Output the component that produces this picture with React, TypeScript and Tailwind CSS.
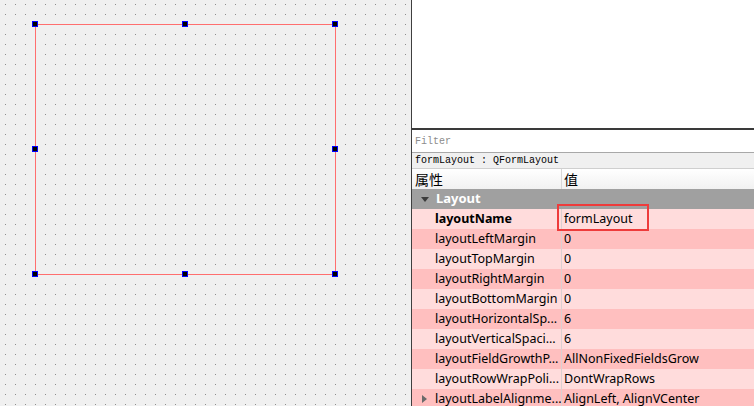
const rows: { name: string; value: string; bold?: boolean; expand?: boolean }[] = [
  { name: "layoutName", value: "formLayout", bold: true },
  { name: "layoutLeftMargin", value: "0" },
  { name: "layoutTopMargin", value: "0" },
  { name: "layoutRightMargin", value: "0" },
  { name: "layoutBottomMargin", value: "0" },
  { name: "layoutHorizontalSp...", value: "6" },
  { name: "layoutVerticalSpaci...", value: "6" },
  { name: "layoutFieldGrowthP...", value: "AllNonFixedFieldsGrow" },
  { name: "layoutRowWrapPoli...", value: "DontWrapRows" },
  { name: "layoutLabelAlignme...", value: "AlignLeft, AlignVCenter", expand: true },
];

const handles = [
  [35, 24], [185, 24], [335, 24],
  [35, 149], [335, 149],
  [35, 274], [185, 274], [335, 274],
];

function Canvas() {
  return (
    <svg width="411" height="406" className="block shrink-0" shapeRendering="crispEdges">
      <defs>
        <pattern id="dots" width="10" height="10" patternUnits="userSpaceOnUse">
          <rect x="5" y="4" width="1" height="1" fill="#8c8c8c" />
        </pattern>
      </defs>
      <rect width="411" height="406" fill="#f0f0f0" />
      <rect width="411" height="406" fill="url(#dots)" />
      <rect x="35" y="24" width="301" height="1" fill="#ff6f6f" />
      <rect x="35" y="274" width="301" height="1" fill="#ff6f6f" />
      <rect x="35" y="24" width="1" height="251" fill="#ff6f6f" />
      <rect x="335" y="24" width="1" height="251" fill="#ff6f6f" />
      {handles.map(([x, y]) => (
        <g key={`${x}-${y}`}>
          <rect x={x - 3} y={y - 3} width="6" height="6" fill="#0000ff" />
          <rect x={x - 2} y={y - 2} width="4" height="4" fill="#000" />
        </g>
      ))}
    </svg>
  );
}

function Arrow({ down }: { down?: boolean }) {
  return down ? (
    <svg width="8" height="5" viewBox="0 0 8 5">
      <path d="M0 0h8L4 5z" fill="#3c3c3c" />
    </svg>
  ) : (
    <svg width="5" height="8" viewBox="0 0 5 8">
      <path d="M0 0v8l5-4z" fill="#6a6a6a" />
    </svg>
  );
}

export default function App() {
  return (
    <div className="flex w-[754px] h-[406px] overflow-hidden bg-[#f0f0f0] font-['Noto_Sans','Noto_Sans_CJK_SC',sans-serif] text-black">
      <Canvas />
      <div className="flex flex-col flex-1 min-w-0 border-l border-[#3f3f3f] bg-white">
        <div className="h-[128px] shrink-0 bg-white" />
        <div className="h-[2px] shrink-0 bg-[#3a3a3a]" />
        <div className="h-[23px] shrink-0 flex items-center pl-[3px] bg-white border-b border-[#a8a8a8] font-['Liberation_Mono',monospace] text-[10px] text-[#8c8c8c]">
          Filter
        </div>
        <div className="h-[16px] shrink-0 flex items-center pl-[3px] bg-[#f0f0f0] border-b border-[#cfcfcf] font-['Liberation_Mono',monospace] text-[10px] leading-none">
          formLayout : QFormLayout
        </div>
        <div className="h-[20px] shrink-0 flex bg-gradient-to-b from-white to-[#f1f1f1] text-[14px] font-['Noto_Sans_CJK_SC',sans-serif] leading-none">
          <div className="w-[150px] shrink-0 flex items-center pl-[3px] border-r border-[#d8d8d8]">属性</div>
          <div className="flex items-center pl-[2px]">值</div>
        </div>
        <div className="h-[20px] shrink-0 flex items-center bg-[#a0a0a0] text-white font-bold text-[13px]">
          <div className="w-[24px] flex justify-center pl-[1px]">
            <Arrow down />
          </div>
          <span>Layout</span>
        </div>
        <div className="relative flex flex-col">
          {rows.map((r, i) => (
            <div
              key={r.name}
              className={`h-[20px] flex shrink-0 text-[12.5px] leading-none ${i % 2 === 0 ? "bg-[#ffdcdc]" : "bg-[#ffbfbf]"}`}
            >
              <div className="w-[150px] shrink-0 overflow-hidden flex items-center border-r border-[#dcd0d0]">
                <div className="w-[23px] shrink-0 flex justify-center pl-[1px]">{r.expand && <Arrow />}</div>
                <span className={`whitespace-nowrap ${r.bold ? "font-bold" : ""}`}>{r.name}</span>
              </div>
              <div className="flex items-center pl-[2px] whitespace-nowrap">{r.value}</div>
            </div>
          ))}
          <div className="absolute left-[145px] top-[-5px] w-[92px] h-[27px] border-2 border-[#ee3b3b]" />
        </div>
      </div>
    </div>
  );
}
